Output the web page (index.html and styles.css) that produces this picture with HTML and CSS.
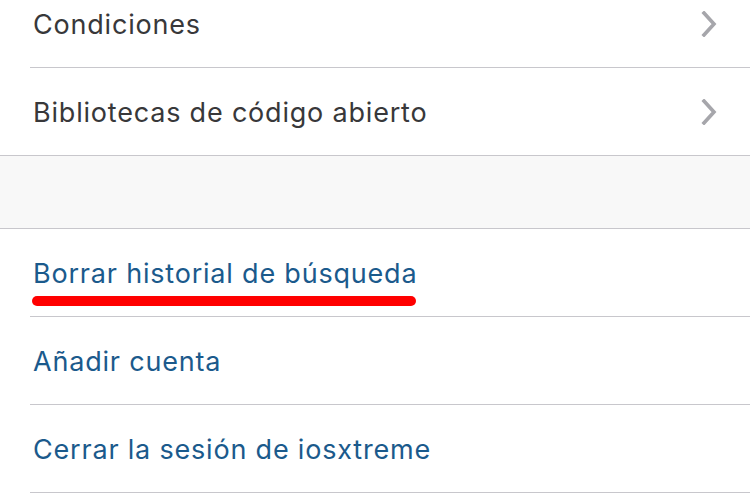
FILE: index.html
```html
<!DOCTYPE html>
<html lang="es">
<head>
    <meta charset="UTF-8">
    <meta name="viewport" content="width=device-width, initial-scale=1.0">
    <title>Ajustes</title>
    <link rel="stylesheet" href="styles.css">
</head>
<body>
    <main class="settings">
        <section class="group">
            <div class="row">
                <div class="cell">
                    <span class="label">Condiciones</span>
                    <svg class="chevron" width="16" height="26" viewBox="0 0 16 26">
                        <path d="M3 2 L13 13 L3 24" fill="none" stroke="#a6a6ab" stroke-width="3.6" stroke-linecap="square"/>
                    </svg>
                </div>
            </div>
            <div class="row last">
                <div class="cell">
                    <span class="label">Bibliotecas de código abierto</span>
                    <svg class="chevron" width="16" height="26" viewBox="0 0 16 26">
                        <path d="M3 2 L13 13 L3 24" fill="none" stroke="#a6a6ab" stroke-width="3.6" stroke-linecap="square"/>
                    </svg>
                </div>
            </div>
        </section>
        <div class="spacer"></div>
        <section class="group">
            <div class="row action marked">
                <div class="cell">
                    <span class="label">Borrar historial de búsqueda</span>
                </div>
                <span class="mark"></span>
            </div>
            <div class="row action">
                <div class="cell">
                    <span class="label">Añadir cuenta</span>
                </div>
            </div>
            <div class="row action">
                <div class="cell">
                    <span class="label">Cerrar la sesión de iosxtreme</span>
                </div>
            </div>
        </section>
    </main>
</body>
</html>
```

FILE: styles.css
```css
body {
    margin: 0;
    background: #ffffff;
    font-family: "Inter", "Liberation Sans", sans-serif;
    overflow: hidden;
}
.settings {
    margin-top: -20px;
}
.group {
    background: #ffffff;
}
.row {
    position: relative;
    height: 88px;
}
.cell {
    height: 87px;
    margin-left: 30px;
    padding-left: 3px;
    padding-right: 33px;
    border-bottom: 1px solid #c8c7cc;
    display: flex;
    align-items: center;
    justify-content: space-between;
}
.row.last .cell {
    margin-left: 0;
    padding-left: 33px;
}
.label {
    font-size: 27px;
    line-height: 32px;
    padding-top: 2px;
    color: #38383a;
    letter-spacing: 0.8px;
}
.action .label {
    color: #1b5a8c;
}
.chevron {
    display: block;
}
.spacer {
    height: 72px;
    background: #f8f8f8;
    border-bottom: 1px solid #c8c7cc;
}
.mark {
    position: absolute;
    left: 32px;
    top: 67px;
    width: 384px;
    height: 10px;
    border-radius: 5px;
    background: #ff0000;
}
```
